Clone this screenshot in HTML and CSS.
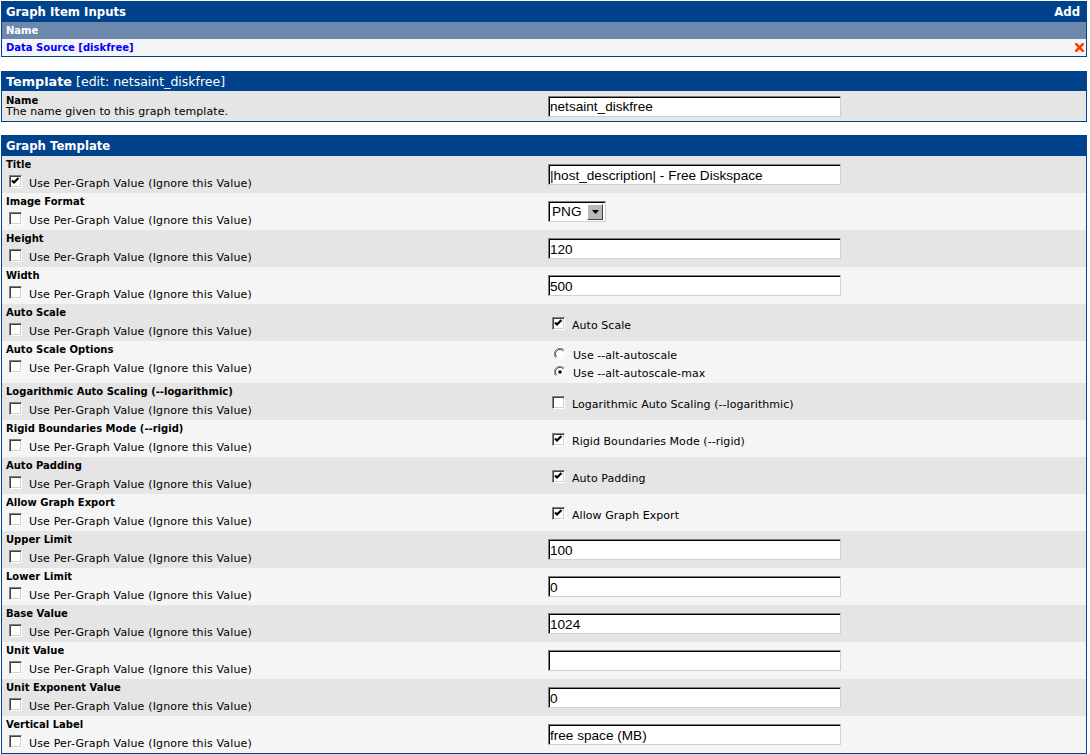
FILE: index.html
```html
<!DOCTYPE html>
<html>
<head>
<meta charset="utf-8">
<link rel="stylesheet" href="styles.css">
</head>
<body>
<div class="page">
  <section class="box box-items">
    <div class="hdr"><span>Graph Item Inputs</span><span class="add">Add</span></div>
    <div class="subhdr">Name</div>
    <div class="item"><a class="dslink" href="#">Data Source [diskfree]</a>
      <svg class="del" width="9" height="9" viewBox="0 0 9 9"><path d="M1.2 1.2 L7.8 7.8 M7.8 1.2 L1.2 7.8" stroke="#ff3c00" stroke-width="2.6" stroke-linecap="square"/></svg></div>
  </section>

  <section class="box box-tpl">
    <div class="hdr hdr2"><b>Template</b>&nbsp;<span class="edit">[edit: netsaint_diskfree]</span></div>
    <div class="row trow a">
      <div class="lbl"><div class="fname">Name</div><div class="desc">The name given to this graph template.</div></div>
      <div class="val"><input class="txt" type="text" value="netsaint_diskfree"></div>
    </div>
  </section>

  <section class="box box-graph">
    <div class="hdr">Graph Template</div>

    <div class="row a">
      <div class="lbl"><div class="fname">Title</div><div class="pg"><span class="cb"><svg width="9" height="9" viewBox="0 0 9 9"><path d="M1 3.5 L3 5.5 L7.5 1" fill="none" stroke="#000" stroke-width="2.2"/></svg></span><span class="pgt">Use Per-Graph Value (Ignore this Value)</span></div></div>
      <div class="val"><input class="txt" type="text" value="|host_description| - Free Diskspace"></div>
    </div>
    <div class="row b">
      <div class="lbl"><div class="fname">Image Format</div><div class="pg"><span class="cb"></span><span class="pgt">Use Per-Graph Value (Ignore this Value)</span></div></div>
      <div class="val"><span class="sel"><span class="selv">PNG</span><span class="selbtn"><svg width="7" height="4" viewBox="0 0 7 4"><path d="M0 0 H7 L3.5 4 Z" fill="#000"/></svg></span></span></div>
    </div>
    <div class="row a">
      <div class="lbl"><div class="fname">Height</div><div class="pg"><span class="cb"></span><span class="pgt">Use Per-Graph Value (Ignore this Value)</span></div></div>
      <div class="val"><input class="txt" type="text" value="120"></div>
    </div>
    <div class="row b">
      <div class="lbl"><div class="fname">Width</div><div class="pg"><span class="cb"></span><span class="pgt">Use Per-Graph Value (Ignore this Value)</span></div></div>
      <div class="val"><input class="txt" type="text" value="500"></div>
    </div>
    <div class="row a">
      <div class="lbl"><div class="fname">Auto Scale</div><div class="pg"><span class="cb"></span><span class="pgt">Use Per-Graph Value (Ignore this Value)</span></div></div>
      <div class="val"><div class="opt"><span class="cb"><svg width="9" height="9" viewBox="0 0 9 9"><path d="M1 3.5 L3 5.5 L7.5 1" fill="none" stroke="#000" stroke-width="2.2"/></svg></span><span class="optt">Auto Scale</span></div></div>
    </div>
    <div class="row b tall">
      <div class="lbl"><div class="fname">Auto Scale Options</div><div class="pg"><span class="cb"></span><span class="pgt">Use Per-Graph Value (Ignore this Value)</span></div></div>
      <div class="val radios">
        <div class="ropt"><svg class="rb" width="12" height="12" viewBox="0 0 12 12"><path d="M10.2 2.2 A5.5 5.5 0 0 0 1.8 9.8" fill="none" stroke="#808080"/><path d="M9.4 3 A4.5 4.5 0 0 0 2.6 9" fill="none" stroke="#404040"/><path d="M1.8 9.8 A5.5 5.5 0 0 0 10.2 2.2" fill="none" stroke="#fff"/><circle cx="6" cy="6" r="3.8" fill="#fff"/></svg><span class="optt">Use --alt-autoscale</span></div>
        <div class="ropt"><svg class="rb" width="12" height="12" viewBox="0 0 12 12"><path d="M10.2 2.2 A5.5 5.5 0 0 0 1.8 9.8" fill="none" stroke="#808080"/><path d="M9.4 3 A4.5 4.5 0 0 0 2.6 9" fill="none" stroke="#404040"/><path d="M1.8 9.8 A5.5 5.5 0 0 0 10.2 2.2" fill="none" stroke="#fff"/><circle cx="6" cy="6" r="3.8" fill="#fff"/><circle cx="6" cy="6" r="1.8" fill="#000"/></svg><span class="optt">Use --alt-autoscale-max</span></div>
      </div>
    </div>
    <div class="row a">
      <div class="lbl"><div class="fname">Logarithmic Auto Scaling (--logarithmic)</div><div class="pg"><span class="cb"></span><span class="pgt">Use Per-Graph Value (Ignore this Value)</span></div></div>
      <div class="val"><div class="opt"><span class="cb"></span><span class="optt">Logarithmic Auto Scaling (--logarithmic)</span></div></div>
    </div>
    <div class="row b">
      <div class="lbl"><div class="fname">Rigid Boundaries Mode (--rigid)</div><div class="pg"><span class="cb"></span><span class="pgt">Use Per-Graph Value (Ignore this Value)</span></div></div>
      <div class="val"><div class="opt"><span class="cb"><svg width="9" height="9" viewBox="0 0 9 9"><path d="M1 3.5 L3 5.5 L7.5 1" fill="none" stroke="#000" stroke-width="2.2"/></svg></span><span class="optt">Rigid Boundaries Mode (--rigid)</span></div></div>
    </div>
    <div class="row a">
      <div class="lbl"><div class="fname">Auto Padding</div><div class="pg"><span class="cb"></span><span class="pgt">Use Per-Graph Value (Ignore this Value)</span></div></div>
      <div class="val"><div class="opt"><span class="cb"><svg width="9" height="9" viewBox="0 0 9 9"><path d="M1 3.5 L3 5.5 L7.5 1" fill="none" stroke="#000" stroke-width="2.2"/></svg></span><span class="optt">Auto Padding</span></div></div>
    </div>
    <div class="row b">
      <div class="lbl"><div class="fname">Allow Graph Export</div><div class="pg"><span class="cb"></span><span class="pgt">Use Per-Graph Value (Ignore this Value)</span></div></div>
      <div class="val"><div class="opt"><span class="cb"><svg width="9" height="9" viewBox="0 0 9 9"><path d="M1 3.5 L3 5.5 L7.5 1" fill="none" stroke="#000" stroke-width="2.2"/></svg></span><span class="optt">Allow Graph Export</span></div></div>
    </div>
    <div class="row a">
      <div class="lbl"><div class="fname">Upper Limit</div><div class="pg"><span class="cb"></span><span class="pgt">Use Per-Graph Value (Ignore this Value)</span></div></div>
      <div class="val"><input class="txt" type="text" value="100"></div>
    </div>
    <div class="row b">
      <div class="lbl"><div class="fname">Lower Limit</div><div class="pg"><span class="cb"></span><span class="pgt">Use Per-Graph Value (Ignore this Value)</span></div></div>
      <div class="val"><input class="txt" type="text" value="0"></div>
    </div>
    <div class="row a">
      <div class="lbl"><div class="fname">Base Value</div><div class="pg"><span class="cb"></span><span class="pgt">Use Per-Graph Value (Ignore this Value)</span></div></div>
      <div class="val"><input class="txt" type="text" value="1024"></div>
    </div>
    <div class="row b">
      <div class="lbl"><div class="fname">Unit Value</div><div class="pg"><span class="cb"></span><span class="pgt">Use Per-Graph Value (Ignore this Value)</span></div></div>
      <div class="val"><input class="txt" type="text" value=""></div>
    </div>
    <div class="row a">
      <div class="lbl"><div class="fname">Unit Exponent Value</div><div class="pg"><span class="cb"></span><span class="pgt">Use Per-Graph Value (Ignore this Value)</span></div></div>
      <div class="val"><input class="txt" type="text" value="0"></div>
    </div>
    <div class="row b">
      <div class="lbl"><div class="fname">Vertical Label</div><div class="pg"><span class="cb"></span><span class="pgt">Use Per-Graph Value (Ignore this Value)</span></div></div>
      <div class="val"><input class="txt" type="text" value="free space (MB)"></div>
    </div>
  </section>
</div>
</body>
</html>
```

FILE: styles.css
```css
html, body {
  margin: 0;
  padding: 0;
  background: #ffffff;
}
body {
  font-family: "DejaVu Sans", Verdana, sans-serif;
  font-size: 10px;
  color: #000;
}
.page {
  padding-top: 1px;
}
.box {
  border: 1px solid #00438c;
  margin: 0 3px 14px 1px;
}
.box-tpl {
  margin-bottom: 13px;
}
.hdr {
  background: #00438c;
  color: #fff;
  font-weight: bold;
  font-size: 11.7px;
  height: 20px;
  line-height: 20px;
  padding: 0 6px 0 4px;
  display: flex;
  align-items: center;
  white-space: nowrap;
}
.add {
  margin-left: auto;
}
.hdr2 {
  height: 19px;
  line-height: 19px;
}
.hdr2 b {
  font-size: 12.8px;
}
.edit {
  font-weight: normal;
  font-size: 12.5px;
}
.subhdr {
  background: #6d88ad;
  color: #fff;
  font-weight: bold;
  height: 17px;
  line-height: 17px;
  padding: 0 4px;
}
.item {
  background: #f5f5f5;
  height: 17px;
  padding: 0 2px 0 4px;
  display: flex;
  align-items: center;
}
.dslink {
  color: #0000ff;
  font-weight: bold;
  text-decoration: none;
}
.del {
  display: block;
  margin-left: auto;
}
.row {
  display: grid;
  grid-template-columns: 543px 1fr;
  height: 37px;
}
.row.tall {
  height: 42px;
}
.trow {
  height: 30px;
}
.row.a { background: #e5e5e5; }
.row.b { background: #f5f5f5; }
.lbl {
  padding: 3px 0 0 4px;
}
.trow .lbl {
  padding-top: 4px;
}
.val {
  padding-left: 3px;
  display: flex;
  align-items: center;
}
.fname {
  font-weight: bold;
  line-height: 12px;
  white-space: nowrap;
}
.trow .fname {
  line-height: 11px;
}
.desc {
  font-size: 11px;
  letter-spacing: 0.07px;
  line-height: 12px;
}
.txt {
  box-sizing: border-box;
  width: 293px;
  height: 21px;
  margin: 0;
  padding: 1px 1px 0 1px;
  font-family: "Liberation Sans", Arial, sans-serif;
  font-size: 13.6px;
  color: #000;
  background: #fff;
  border: 1px solid;
  border-color: #808080 #d4d0c8 #d4d0c8 #808080;
  box-shadow: inset 1px 1px 0 #000;
  outline: none;
  display: block;
}
.pg {
  display: flex;
  align-items: flex-start;
  margin-top: 4px;
  padding-left: 3px;
}
.pgt, .optt {
  font-size: 11px;
  letter-spacing: 0.15px;
  line-height: 14px;
  padding-top: 2px;
  white-space: nowrap;
}
.optt {
  letter-spacing: 0.05px;
}
.cb {
  box-sizing: border-box;
  width: 13px;
  height: 13px;
  flex: none;
  background: #fff;
  border: 1px solid;
  border-color: #808080 #ffffff #ffffff #808080;
  box-shadow: inset 1px 1px 0 #404040, inset -1px -1px 0 #d4d0c8;
  display: flex;
  align-items: center;
  justify-content: center;
  margin-right: 7px;
}
.cb svg {
  display: block;
}
.opt {
  display: flex;
  align-items: flex-start;
  padding-left: 4px;
  padding-top: 4px;
}
.radios {
  flex-direction: column;
  align-items: stretch;
  justify-content: flex-start;
  padding-top: 7px;
}
.ropt {
  display: flex;
  align-items: flex-start;
  padding-left: 6px;
  height: 18px;
}
.ropt .optt {
  padding-top: 1px;
}
.rb {
  flex: none;
  margin-right: 7px;
  display: block;
}
.sel {
  display: flex;
  box-sizing: border-box;
  height: 21px;
  width: 58px;
  border: 1px solid;
  border-color: #808080 #d4d0c8 #d4d0c8 #808080;
  box-shadow: inset 1px 1px 0 #000;
  background: #fff;
  padding: 2px 2px 2px 3px;
  align-items: center;
}
.selv {
  flex: 1;
  font-family: "Liberation Sans", Arial, sans-serif;
  font-size: 13.6px;
}
.selbtn {
  box-sizing: border-box;
  width: 16px;
  height: 16px;
  background: #b8b8b8;
  border: 1px solid;
  border-color: #ffffff #404040 #404040 #ffffff;
  display: flex;
  align-items: center;
  justify-content: center;
}
.selbtn svg { display: block; }
```
